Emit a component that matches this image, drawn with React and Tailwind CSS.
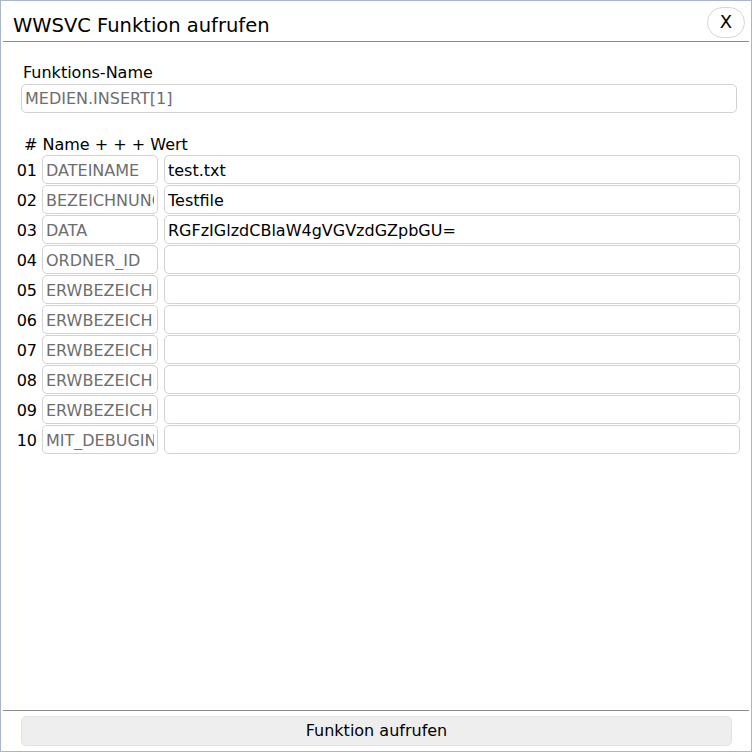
const ROWS = [
  { nr: '01', name: 'DATEINAME', wert: 'test.txt' },
  { nr: '02', name: 'BEZEICHNUNG', wert: 'Testfile' },
  { nr: '03', name: 'DATA', wert: 'RGFzIGlzdCBlaW4gVGVzdGZpbGU=' },
  { nr: '04', name: 'ORDNER_ID', wert: '' },
  { nr: '05', name: 'ERWBEZEICHNUNG1', wert: '' },
  { nr: '06', name: 'ERWBEZEICHNUNG2', wert: '' },
  { nr: '07', name: 'ERWBEZEICHNUNG3', wert: '' },
  { nr: '08', name: 'ERWBEZEICHNUNG4', wert: '' },
  { nr: '09', name: 'ERWBEZEICHNUNG5', wert: '' },
  { nr: '10', name: 'MIT_DEBUGINFO', wert: '' },
]

const FONT = 'font-["DejaVu_Sans",sans-serif]'

export default function App() {
  return (
    <div className={`w-[752px] h-[752px] bg-white border border-[#a9b6c6] flex flex-col ${FONT} text-black`}>
      {/* Titelzeile */}
      <div className="flex items-center justify-between h-[40px] pl-[12px] pr-[6px] shrink-0">
        <span className="mt-[10px] text-[19.5px] leading-none">WWSVC Funktion aufrufen</span>
        <button className="w-[38px] h-[31px] mt-[2px] rounded-full border border-[#d6d6d6] bg-white text-[18px] leading-none flex items-center justify-center">
          X
        </button>
      </div>
      <div className="mx-[2px] h-px bg-[#8a8a8a] shrink-0" />

      {/* Inhalt */}
      <div className="flex-1 flex flex-col pt-[21px] pl-[15px] pr-[11px]">
        <div className="pl-[7px] text-[16px] leading-[20px]">Funktions-Name</div>
        <input
          readOnly
          value="MEDIEN.INSERT[1]"
          className="ml-[5px] mr-[3px] mt-[1px] h-[29px] rounded-[5px] border border-[#d2d2d2] px-[3px] text-[16px] text-[#6e6e6e] outline-none"
        />

        <div className="mt-[22px] pl-[8px] text-[16px] leading-[20px]">
          # Name + + + Wert
        </div>

        <div className="flex flex-col gap-px">
          {ROWS.map((r) => (
            <div key={r.nr} className="flex items-center h-[29px]">
              <span className="w-[26px] pt-[2px] text-[16px] text-right pr-[5px]">{r.nr}</span>
              <input
                readOnly
                value={r.name}
                className="w-[116px] h-[29px] rounded-[5px] border border-[#d2d2d2] px-[3px] pt-[2px] text-[16px] text-[#6e6e6e] outline-none"
              />
              <input
                readOnly
                value={r.wert}
                className="ml-[6px] flex-1 h-[29px] rounded-[5px] border border-[#d2d2d2] px-[3px] pt-[2px] text-[16px] text-black outline-none"
              />
            </div>
          ))}
        </div>
      </div>

      {/* Fußzeile */}
      <div className="mx-[2px] h-px bg-[#8a8a8a] shrink-0" />
      <div className="pt-[5px] pb-[5px] pl-[20px] pr-[19px] shrink-0">
        <button className="w-full h-[30px] rounded-[5px] border border-[#e2e2e2] bg-[#eeeeee] text-[16px]">
          Funktion aufrufen
        </button>
      </div>
    </div>
  )
}
